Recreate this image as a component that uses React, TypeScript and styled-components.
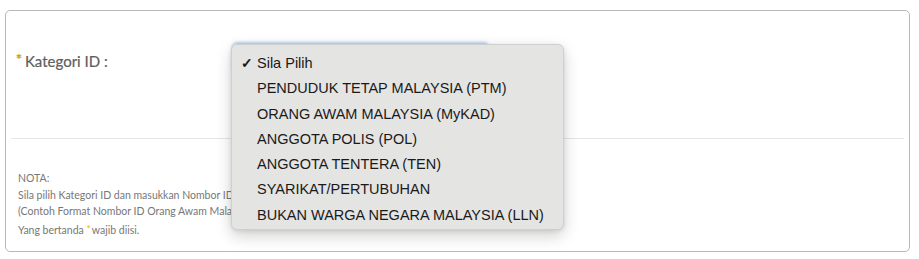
import React from 'react';
import styled, { createGlobalStyle } from 'styled-components';

const GlobalStyle = createGlobalStyle`
  body {
    margin: 0;
    background: #fff;
    font-family: Lato, "Open Sans", sans-serif;
  }
`;

const Card = styled.div`
  box-sizing: border-box;
  margin: 10px 10px 0 5px;
  width: 905px;
  height: 242px;
  border: 1px solid #b8b8b8;
  border-radius: 5px;
  display: flex;
  flex-direction: column;
`;

const FormSection = styled.div`
  height: 127px;
  padding: 33px 0 0 10px;
  box-sizing: border-box;
`;

const FieldRow = styled.div`
  display: flex;
  align-items: flex-start;
`;

const Label = styled.label`
  width: 217px;
  font-size: 15px;
  line-height: 30px;
  color: #5e5e5e;
  -webkit-text-stroke: 0.2px #5e5e5e;
`;

const Star = styled.span<{ $small?: boolean }>`
  color: #f2c200;
  font-size: ${(p) => (p.$small ? '10px' : '14px')};
  font-weight: 700;
  margin-right: ${(p) => (p.$small ? '1px' : '3px')};
  vertical-align: ${(p) => (p.$small ? '2px' : '3px')};
`;

const SelectWrap = styled.div`
  position: relative;
  width: 255px;
  height: 30px;
`;

const FakeSelect = styled.div`
  width: 100%;
  height: 100%;
  border-radius: 4px;
  box-shadow: 0 -1px 3px 1px rgba(120, 170, 230, 0.55);
  background: #fff;
`;

const Menu = styled.ul`
  position: absolute;
  top: 0;
  left: -2px;
  width: 333px;
  height: 186px;
  box-sizing: border-box;
  margin: 0;
  padding: 6px 0 0;
  list-style: none;
  background: #e4e4e3;
  border: 1px solid #cfcfcf;
  border-radius: 6px;
  box-shadow: 0 6px 16px rgba(0, 0, 0, 0.18), 0 1px 4px rgba(0, 0, 0, 0.1);
  font-family: "Liberation Sans", Arial, sans-serif;
  z-index: 10;
`;

const Option = styled.li`
  position: relative;
  height: 25.3px;
  line-height: 25.3px;
  padding-left: 25px;
  font-size: 14.5px;
  color: #1a1a1a;
  white-space: nowrap;
`;

const Check = styled.span`
  position: absolute;
  left: 9px;
  top: 0;
  font-size: 14px;
  font-weight: 700;
`;

const Divider = styled.hr`
  margin: 0 5px;
  border: none;
  border-top: 1px solid #e6e6e6;
`;

const Nota = styled.div`
  padding: 31px 0 0 12px;
  font-size: 10.5px;
  line-height: 16.5px;
  color: #777;
`;

const options = [
  'Sila Pilih',
  'PENDUDUK TETAP MALAYSIA (PTM)',
  'ORANG AWAM MALAYSIA (MyKAD)',
  'ANGGOTA POLIS (POL)',
  'ANGGOTA TENTERA (TEN)',
  'SYARIKAT/PERTUBUHAN',
  'BUKAN WARGA NEGARA MALAYSIA (LLN)',
];

export default function App() {
  return (
    <>
      <GlobalStyle />
      <Card>
        <FormSection>
          <FieldRow>
            <Label>
              <Star>*</Star>Kategori ID :
            </Label>
            <SelectWrap>
              <FakeSelect />
              <Menu>
                {options.map((o, i) => (
                  <Option key={o}>
                    {i === 0 && <Check>✓</Check>}
                    {o}
                  </Option>
                ))}
              </Menu>
            </SelectWrap>
          </FieldRow>
        </FormSection>
        <Divider />
        <Nota>
          NOTA:
          <br />
          Sila pilih Kategori ID dan masukkan Nombor ID yang berkaitan.
          <br />
          (Contoh Format Nombor ID Orang Awam Malaysia : 800101015555)
          <br />
          Yang bertanda <Star $small>*</Star>wajib diisi.
        </Nota>
      </Card>
    </>
  );
}
